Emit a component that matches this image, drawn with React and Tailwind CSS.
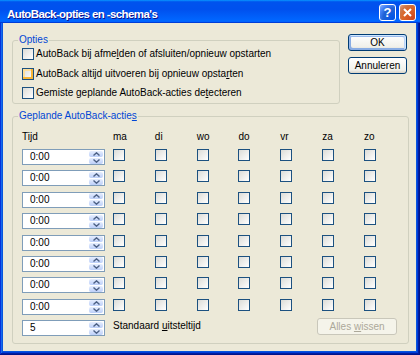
const DAYS = ["ma", "di", "wo", "do", "vr", "za", "zo"];
const TIMES = ["0:00", "0:00", "0:00", "0:00", "0:00", "0:00", "0:00", "0:00"];

function Check({hot}) {
    return (
        <span className={hot
            ? "block w-[12px] h-[12px] shrink-0 border border-[#1c5180] bg-[linear-gradient(135deg,#dcdcd7,#fff)] shadow-[inset_-2px_-2px_#f8b636,inset_2px_2px_#fedf9c]"
            : "block w-[12px] h-[12px] shrink-0 border border-[#1c5180] bg-[linear-gradient(135deg,#dcdcd7,#fff)]"}/>
    );
}

function SpinButton({up}) {
    return (
        <div className="flex-1 flex items-center justify-center rounded-[2px] bg-[linear-gradient(#e6eefe,#bccff9)]">
            <svg width="7" height="4" viewBox="0 0 7 4">
                <path d={up ? "M0.5 3.5L3.5 0.8L6.5 3.5" : "M0.5 0.5L3.5 3.2L6.5 0.5"}
                      stroke="#4d6185" strokeWidth="1.4" fill="none"/>
            </svg>
        </div>
    );
}

function Spinner({value}) {
    return (
        <div className="flex items-center w-[83px] h-[16px] shrink-0 border border-[#7f9db9] bg-white pl-[7px] pr-px">
            <span className="flex-1 leading-[12px]">{value}</span>
            <div className="flex flex-col w-[14px] h-[13px] gap-px">
                <SpinButton up/>
                <SpinButton/>
            </div>
        </div>
    );
}

function Button({children, isDefault, disabled, className = ""}) {
    let look = "border-[#003c74] bg-[linear-gradient(#ffffff,#f0f0ea_80%,#d8d2c6)] text-black";
    if (isDefault)
        look += " shadow-[inset_-1px_1px_#cee7ff,inset_1px_2px_#98b8ea,inset_-2px_2px_#bcd4f6,inset_1px_-1px_#89ade4,inset_2px_-2px_#89ade4]";
    if (disabled)
        look = "border-[#c9c7ba] bg-[#f5f4ea] text-[#aca899]";

    return (
        <button className={`h-[17px] rounded-[3px] border text-[10px] leading-[12px] ${look} ${className}`}>
            {children}
        </button>
    );
}

function TitleBar() {
    return (
        <div className="h-[23px] shrink-0 flex items-center pt-[2px] pl-[7px] pr-[4px] bg-[linear-gradient(180deg,#0997ff_0%,#0053ee_8%,#0050ee_40%,#0066ff_88%,#0066ff_93%,#005bff_95%,#003dd7_96%,#003dd7_100%)]">
            <div className="flex-1 mt-[2px] text-white font-bold text-[11.5px] leading-[16px] tracking-[-0.6px] [text-shadow:1px_1px_#0f1089]">
                AutoBack-opties en -schema's
            </div>

            <div className="flex gap-[3px]">
                <div className="w-[17px] h-[17px] rounded-[3px] border border-white flex items-center justify-center bg-[radial-gradient(circle_at_90%_90%,#0054e9_0%,#2263d5_55%,#4481f6_75%,#8cb6ff_100%)] text-white font-bold text-[13px] leading-none">
                    ?
                </div>
                <div className="w-[17px] h-[17px] rounded-[3px] border border-white flex items-center justify-center bg-[radial-gradient(circle_at_90%_90%,#cc4621_0%,#dc6527_55%,#cd7546_75%,#e5a486_100%)]">
                    <svg width="9" height="9" viewBox="0 0 9 9">
                        <path d="M1 1L8 8M8 1L1 8" stroke="white" strokeWidth="2"/>
                    </svg>
                </div>
            </div>
        </div>
    );
}

export default function App() {
    return (
        <div className="w-[420px] h-[355px] flex flex-col bg-[#0855dd] shadow-[inset_-1px_-1px_#00138c,inset_1px_1px_#0831d9,inset_-2px_-2px_#001ea0,inset_2px_2px_#166aee,inset_-3px_-3px_#003bda,inset_3px_3px_#0855dd] font-['Liberation_Sans',Arial,sans-serif] text-[10px] leading-[12px] text-black select-none">
            <TitleBar/>

            <div className="flex-1 ml-[3px] mr-[4px] mb-[4px] bg-[#ece9d8] pl-[9px] pt-[11px]">
                <div className="flex items-start gap-[8px]">
                    <fieldset className="w-[328px] border border-[#d0d0bf] rounded-[3px]">
                        <legend className="ml-[5px] px-px text-[#0046d5]">Opties</legend>

                        <div className="flex flex-col gap-[7.5px] pl-[9px] pt-[2px] pb-[4px]">
                            <label className="flex items-center gap-[2px]">
                                <Check/>
                                <span>AutoBack bij afme<u>l</u>den of afsluiten/opnieuw opstarten</span>
                            </label>
                            <label className="flex items-center gap-[2px]">
                                <Check hot/>
                                <span>AutoBack altijd uitvoeren bij opnieuw opsta<u>r</u>ten</span>
                            </label>
                            <label className="flex items-center gap-[2px]">
                                <Check/>
                                <span>Gemiste geplande AutoBack-acties de<u>t</u>ecteren</span>
                            </label>
                        </div>
                    </fieldset>

                    <div className="flex flex-col gap-[6px]">
                        <Button isDefault className="w-[59px]">OK</Button>
                        <Button className="w-[59px]">Annuleren</Button>
                    </div>
                </div>

                <fieldset className="mt-[6px] w-[397px] min-w-0 border border-[#d0d0bf] rounded-[3px]">
                    <legend className="ml-[5px] px-px text-[#0046d5]">Geplande AutoBack-actie<u>s</u></legend>

                    <div className="pl-[9px] pr-[11px] pt-[9px] pb-[7px]">
                        <div className="grid grid-cols-[91px_repeat(6,41.83px)_13px] h-[12px] mb-[6px]">
                            <span>Tijd</span>
                            {DAYS.map(day => <span key={day}>{day}</span>)}
                        </div>

                        <div className="flex flex-col gap-[5.4px]">
                            {TIMES.map((time, i) =>
                                <div key={i} className="grid grid-cols-[91px_repeat(6,41.83px)_13px] h-[16px] items-start">
                                    <Spinner value={time}/>
                                    {DAYS.map(day => <Check key={day}/>)}
                                </div>)}

                            <div className="flex items-start h-[16px]">
                                <Spinner value="5"/>
                                <span className="ml-[8px] flex-1">Standaard <u>u</u>itsteltijd</span>
                                <Button disabled className="w-[80px] -mt-[2px]">Alles <u>w</u>issen</Button>
                            </div>
                        </div>
                    </div>
                </fieldset>
            </div>
        </div>
    );
}
